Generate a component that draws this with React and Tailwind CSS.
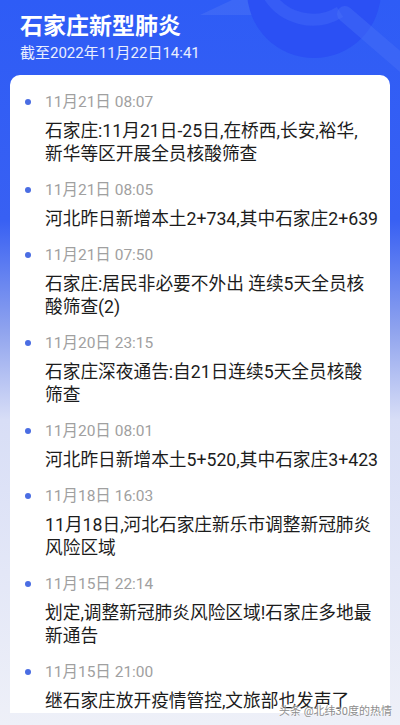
import React from "react";

const items = [
  { t: "11月21日 08:07", c: ["石家庄:11月21日-25日,在桥西,长安,裕华,", "新华等区开展全员核酸筛查"] },
  { t: "11月21日 08:05", c: ["河北昨日新增本土2+734,其中石家庄2+639"] },
  { t: "11月21日 07:50", c: ["石家庄:居民非必要不外出 连续5天全员核", "酸筛查(2)"] },
  { t: "11月20日 23:15", c: ["石家庄深夜通告:自21日连续5天全员核酸", "筛查"] },
  { t: "11月20日 08:01", c: ["河北昨日新增本土5+520,其中石家庄3+423"] },
  { t: "11月18日 16:03", c: ["11月18日,河北石家庄新乐市调整新冠肺炎", "风险区域"] },
  { t: "11月15日 22:14", c: ["划定,调整新冠肺炎风险区域!石家庄多地最", "新通告"] },
  { t: "11月15日 21:00", c: ["继石家庄放开疫情管控,文旅部也发声了"] },
];

export default function App() {
  return (
    <div
      className="relative h-[725px] w-[400px] overflow-hidden bg-[linear-gradient(180deg,#2e5cf6_0px,#3860f3_220px,#8fa3ee_330px,#d8def6_420px,#eef0f8_725px)]"
      style={{ fontFamily: 'Roboto, "Noto Sans CJK SC", "Noto Sans", sans-serif' }}
    >
      <svg className="absolute left-0 top-0" width="400" height="80" viewBox="0 0 400 80">
        <polygon points="200,15 232,0 262,0 255,15" fill="#ffffff" fillOpacity="0.07" />
        <circle cx="314" cy="-9" r="67" fill="#2b50f4" />
        <path d="M268 -6 A 52 52 0 0 0 340 12" stroke="#4a72f8" strokeOpacity="0.35" strokeWidth="12" fill="none" />
        <path d="M345 14 L 410 70" stroke="#4a74f8" strokeOpacity="0.4" strokeWidth="16" strokeLinecap="round" fill="none" />
      </svg>

      <div className="relative px-5 pt-[12px]">
        <div className="text-[23px] font-bold leading-[30px] text-white">石家庄新型肺炎</div>
        <div className="mt-[1px] text-[15px] leading-[20px] text-white/90">截至2022年11月22日14:41</div>
      </div>

      <div className="relative mx-[10px] mt-[12px] rounded-t-[10px] bg-white pl-[35px] pr-[8px] pt-[17px]">
        <div className="flex flex-col gap-[14px]">
          {items.map((it, i) => (
            <div key={i} className="relative">
              <span className="absolute left-[-20px] top-[7px] h-[6px] w-[6px] rounded-full bg-[#4a6de3]" />
              <div className="text-[15.5px] leading-[20px] text-[#a0a0a0]">{it.t}</div>
              <div className="mt-2 text-[17.7px] leading-[23px] text-[#1c1c1c]">
                {it.c.map((l, j) => (
                  <div key={j} className="whitespace-nowrap">{l}</div>
                ))}
              </div>
            </div>
          ))}
        </div>
      </div>

      <div className="absolute bottom-[6px] right-[8px] text-[11px] leading-[14px] text-[#8d8d8d] [text-shadow:0_0_2px_#ffffff]">
        头条 @北纬30度的热情
      </div>
    </div>
  );
}
